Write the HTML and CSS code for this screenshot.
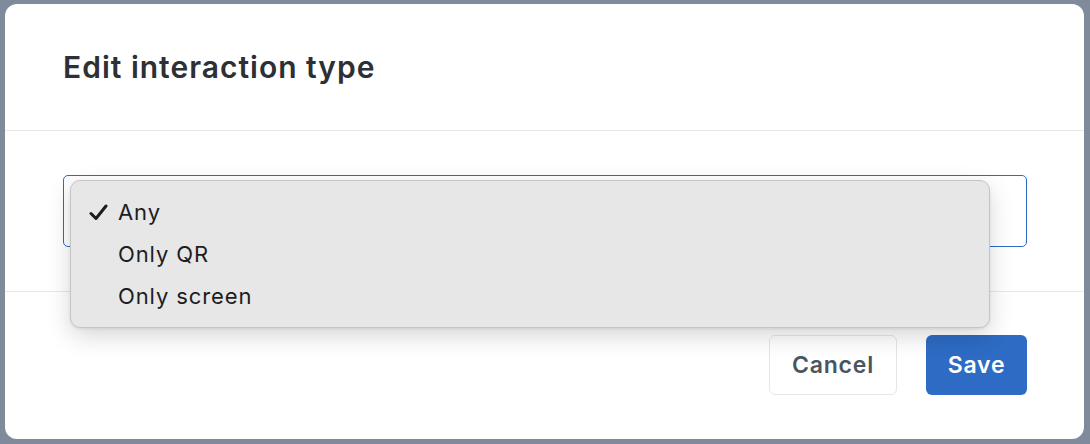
FILE: index.html
```html
<!DOCTYPE html>
<html lang="en">

<head>
    <meta charset="UTF-8">
    <meta name="viewport" content="width=device-width, initial-scale=1.0">
    <title>Edit interaction type</title>
    <link rel="stylesheet" href="styles.css">
</head>

<body>

    <div class="modal">
        <div class="modal-header">
            <h1>Edit interaction type</h1>
        </div>

        <div class="modal-body">
            <div class="select-wrap">
                <div class="select-box"></div>
                <ul class="dropdown">
                    <li class="selected">
                        <svg class="check" width="19" height="17" viewBox="0 0 19 17">
                            <path d="M2 9.5 L7 14.5 L17 2" fill="none" stroke="#1d1d1f" stroke-width="3" stroke-linecap="round" stroke-linejoin="round" />
                        </svg>
                        Any
                    </li>
                    <li>Only QR</li>
                    <li>Only screen</li>
                </ul>
            </div>
        </div>

        <div class="modal-footer">
            <button class="btn btn-cancel">Cancel</button>
            <button class="btn btn-save">Save</button>
        </div>
    </div>

</body>

</html>
```

FILE: styles.css
```css
body {
    margin: 0;
    padding: 4px 6px 5px 5px;
    background-color: #7f8a9b;
    font-family: Inter, "Noto Sans", sans-serif;
}

.modal {
    background-color: white;
    border-radius: 12px;
    height: 435px;
    display: flex;
    flex-direction: column;
    overflow: hidden;
}

.modal-header {
    height: 126px;
    padding: 0 58px;
    display: flex;
    align-items: center;
    border-bottom: 1px solid #e6e8eb;
}

h1 {
    margin: 0;
    font-size: 30px;
    font-weight: 600;
    color: #2d3035;
    letter-spacing: 1px;
}

.modal-body {
    padding: 44px 57px 44px 58px;
    border-bottom: 1px solid #e6e8eb;
}

.select-wrap {
    position: relative;
}

.select-box {
    height: 70px;
    border: 1px solid #2a6bc6;
    border-radius: 5px;
}

.dropdown {
    position: absolute;
    top: 5px;
    left: 7px;
    width: 920px;
    margin: 0;
    padding: 10px 0;
    list-style: none;
    box-sizing: border-box;
    background-color: #e6e7e6;
    border: 1px solid #c4c5c6;
    border-radius: 10px;
    box-shadow: 0 8px 24px rgba(0, 0, 0, 0.16), 0 1px 3px rgba(0, 0, 0, 0.08);
}

.dropdown li {
    position: relative;
    height: 42px;
    line-height: 42px;
    padding-left: 47px;
    font-size: 22px;
    letter-spacing: 0.9px;
    color: #1d1d1f;
}

.check {
    position: absolute;
    left: 18px;
    top: 13px;
}

.modal-footer {
    flex: 1;
    display: flex;
    justify-content: flex-end;
    align-items: flex-start;
    gap: 29px;
    padding: 43px 57px 0 0;
}

.btn {
    height: 60px;
    border-radius: 6px;
    font-family: Inter, "Noto Sans", sans-serif;
    font-size: 23px;
    font-weight: 600;
    letter-spacing: 0.8px;
    cursor: pointer;
}

.btn-cancel {
    width: 128px;
    background-color: white;
    color: #4a5560;
    border: 1px solid #e4e6e9;
}

.btn-save {
    width: 101px;
    background-color: #2d6bc4;
    color: white;
    border: none;
}
```
